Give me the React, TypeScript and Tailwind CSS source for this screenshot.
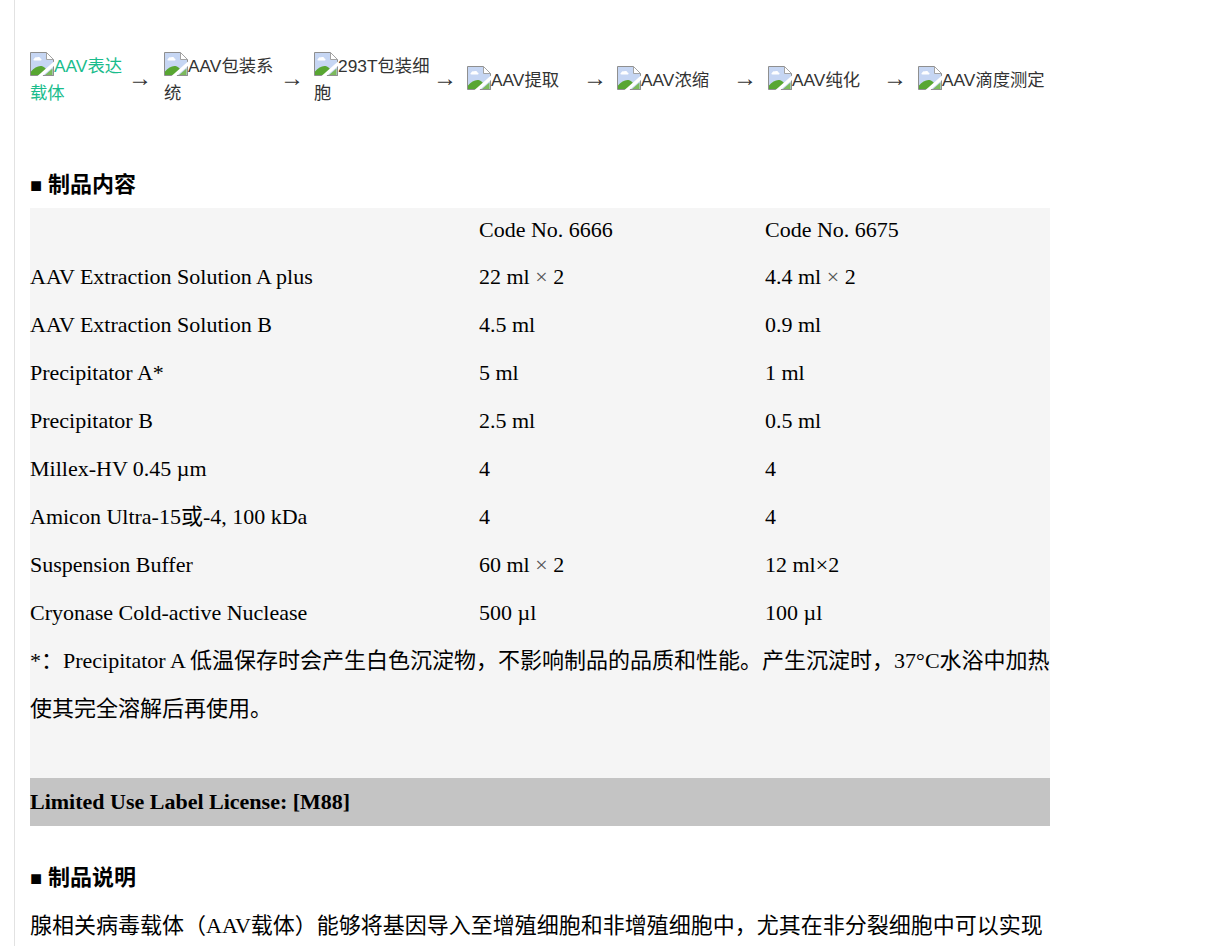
const serif = "font-['Liberation_Serif','Noto_Sans_CJK_SC',serif]";

function BrokenImg() {
  return (
    <svg width="24" height="24" viewBox="0 0 24 24" className="inline-block align-[-4px] shrink-0">
      <path d="M0.5 0.5H16.500L23.500 7.500V23.500H0.500Z" fill="#c6d6f3" stroke="#8f8f8f" />
      <path d="M16.500 0.500V7.500H23.500Z" fill="#fff" stroke="#a3a3a3" />
      <path d="M4 7c.5-1.500 2-2 3-1.500 1-.8 3-.5 3.500 1 1 0 1.500 1.500.5 2H4.500C3 8.500 3 7.500 4 7Z" fill="#fff" />
      <path d="M1 23V19.500C4 16 8 13.500 11.500 14c2 .3 3.500 2 5 3.500L11 23Z" fill="#58a632" />
      <path d="M7.500 24L24 9.500V14L12.500 24Z" fill="#fff" />
      <path d="M15 23l7.500-6.500V23Z" fill="#7cb95c" />
      <path d="M13 23.500H23.500V15" fill="none" stroke="#8f8f8f" />
    </svg>
  );
}

const steps = [
  { label: "AAV表达载体", w: "w-[98px]", arrow: "w-[36px]", link: true },
  { label: "AAV包装系统", w: "w-[116px]", arrow: "w-[34px]" },
  { label: "293T包装细胞", w: "w-[119px]", arrow: "w-[34px]" },
  { label: "AAV提取", w: "w-[116px]", arrow: "w-[34px]" },
  { label: "AAV浓缩", w: "w-[116px]", arrow: "w-[35px]" },
  { label: "AAV纯化", w: "w-[115px]", arrow: "w-[35px]" },
  { label: "AAV滴度测定", w: "w-[132px]", arrow: "" },
];

const rows = [
  ["", "Code No. 6666", "Code No. 6675"],
  ["AAV Extraction Solution A plus", "22 ml × 2", "4.4 ml × 2"],
  ["AAV Extraction Solution B", "4.5 ml", "0.9 ml"],
  ["Precipitator A*", "5 ml", "1 ml"],
  ["Precipitator B", "2.5 ml", "0.5 ml"],
  ["Millex-HV 0.45 µm", "4", "4"],
  ["Amicon Ultra-15或-4, 100 kDa", "4", "4"],
  ["Suspension Buffer", "60 ml × 2", "12 ml×2"],
  ["Cryonase Cold-active Nuclease", "500 µl", "100 µl"],
];

function Qty({ text }: { text: string }) {
  const parts = text.split(" × ");
  if (parts.length < 2) return <div>{text}</div>;
  return (
    <div>
      {parts[0]} <span className="text-[#555]">×</span> {parts[1]}
    </div>
  );
}

function Heading({ children }: { children: string }) {
  return (
    <h3 className="h-[47px] text-[22px] leading-[48px] font-bold text-black font-['Liberation_Sans','Noto_Sans_CJK_SC',sans-serif]">
      <span className="text-[20px] mr-[6px]">■</span>
      {children}
    </h3>
  );
}

export default function App() {
  return (
    <div className="h-[946px] overflow-hidden bg-white ml-[14px] border-l border-[#e2e2e2] pl-[15px]">
      <div className="w-[1020px]">
        <div className="pt-[52px] flex items-center text-[17.33px] leading-[27px] text-[#333] font-['Liberation_Sans','Noto_Sans_CJK_SC',sans-serif]">
          {steps.map((s) => (
            <div key={s.label} className="flex items-center">
              <div className={`${s.w} ${s.link ? "text-[#1abc8c]" : ""}`}>
                <BrokenImg />
                {s.label}
              </div>
              {s.arrow && <div className={`${s.arrow} ${serif} text-[24px] leading-[24px] -mt-[3px]`}>→</div>}
            </div>
          ))}
        </div>
        <div className="mt-[54px]">
          <Heading>制品内容</Heading>
        </div>
        <div className={`bg-[#f5f5f5] text-[22px] text-black ${serif}`}>
          {rows.map((r, i) => (
            <div
              key={r[0] + r[1]}
              className={`grid grid-cols-[449px_286px_285px] leading-[44px] ${i === 0 ? "h-[47px]" : "h-[48px]"}`}
            >
              <div>{r[0]}</div>
              <Qty text={r[1]} />
              <Qty text={r[2]} />
            </div>
          ))}
          <div className="-mt-[2px] leading-[48px] overflow-hidden whitespace-nowrap">
            <div>*：Precipitator A 低温保存时会产生白色沉淀物，不影响制品的品质和性能。产生沉淀时，37°C水浴中加热</div>
            <div>使其完全溶解后再使用。</div>
          </div>
          <div className="h-[45px]" />
        </div>
        <div className={`bg-[#c4c4c4] h-[48px] text-[22px] leading-[48px] font-bold text-black ${serif}`}>
          Limited Use Label License: [M88]
        </div>
        <div className="mt-[28px]">
          <Heading>制品说明</Heading>
        </div>
        <p className={`mt-[1px] text-[22px] leading-[48px] text-black ${serif}`}>
          腺相关病毒载体（AAV载体）能够将基因导入至增殖细胞和非增殖细胞中，尤其在非分裂细胞中可以实现
        </p>
      </div>
    </div>
  );
}
